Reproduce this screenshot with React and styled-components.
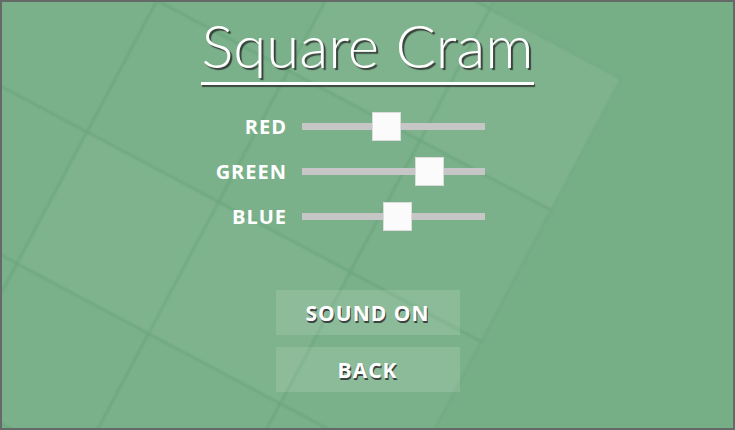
import { Fragment } from "react";
import styled, { createGlobalStyle } from "styled-components";

const GlobalStyle = createGlobalStyle`
  html, body {
    margin: 0;
    padding: 0;
    background: #76ae86;
  }
  * {
    box-sizing: border-box;
  }
`;

const TILE = 149;
const COLS = [-3, -2, -1, 0, 1, 2];
const ROWS = [-3, -2, -1, 0, 1, 2, 3];
const LIGHT = ["2,-2", "1,-2", "0,0", "1,0"];
const EMPTY = ["2,-3"];

const channels = [
  { name: "RED", value: 0.455 },
  { name: "GREEN", value: 0.735 },
  { name: "BLUE", value: 0.525 },
];

const Screen = styled.div`
  position: relative;
  width: 735px;
  height: 430px;
  overflow: hidden;
  background: #76ae86;
  border: 2px solid #646b67;
  font-family: "Open Sans", "Liberation Sans", sans-serif;
`;

const TileLayer = styled.div`
  position: absolute;
  left: 85px;
  top: 130px;
  transform: rotate(28deg);
  transform-origin: 0 0;
  filter: blur(0.8px);
`;

const TileGrid = styled.div`
  display: grid;
  grid-template-columns: repeat(${COLS.length}, ${TILE}px);
  grid-auto-rows: ${TILE}px;
  margin-left: ${-3 * TILE}px;
  margin-top: ${-3 * TILE}px;
`;

const Tile = styled.div`
  visibility: ${(p) => (p.$empty ? "hidden" : "visible")};
  background: ${(p) =>
    p.$light ? "rgba(255, 255, 255, 0.06)" : "rgba(255, 255, 255, 0.03)"};
  border: 1.5px solid rgba(40, 120, 70, 0.2);
`;

const Content = styled.div`
  position: relative;
  z-index: 1;
  display: flex;
  flex-direction: column;
  align-items: center;
  padding-top: 13px;
`;

const TitleBlock = styled.div`
  display: flex;
  flex-direction: column;
  align-items: stretch;
`;

const TitleText = styled.h1`
  margin: 0;
  font-family: Lato, "Open Sans", sans-serif;
  font-weight: 300;
  font-size: 60px;
  line-height: 1;
  color: #fff;
  white-space: nowrap;
  text-shadow: 2px 2px 1px rgba(45, 45, 45, 0.85);
`;

const Rule = styled.div`
  height: 3px;
  margin-top: 7px;
  background: #fff;
  box-shadow: 1px 2px 1px rgba(45, 45, 45, 0.8);
`;

const SliderGrid = styled.div`
  align-self: flex-start;
  margin-left: 181px;
  margin-top: 27px;
  display: grid;
  grid-template-columns: 104px 183px;
  grid-auto-rows: 29px;
  column-gap: 15px;
  row-gap: 16px;
  align-items: center;
`;

const Label = styled.span`
  justify-self: end;
  font-weight: 700;
  font-size: 20px;
  letter-spacing: 1px;
  color: #fff;
  line-height: 1;
`;

const Track = styled.div`
  position: relative;
  height: 7px;
  background: #c6c6c6;
`;

const Thumb = styled.div`
  position: absolute;
  top: 50%;
  width: 29px;
  height: 29px;
  margin-top: -14.5px;
  background: #fbfbfb;
  border: 1px solid #dcdcdc;
`;

const ButtonStack = styled.div`
  margin-top: 59px;
  display: flex;
  flex-direction: column;
  gap: 12px;
`;

const MenuButton = styled.button`
  width: 184px;
  height: 45px;
  border: none;
  padding: 0;
  background: rgba(255, 255, 255, 0.13);
  color: #fff;
  font-family: "Open Sans", "Liberation Sans", sans-serif;
  font-weight: 700;
  font-size: 21px;
  letter-spacing: 1px;
  text-shadow: 1px 2px 0 rgba(50, 50, 50, 0.9);
  cursor: pointer;
`;

const Slider = ({ value }) => (
  <Track>
    <Thumb style={{ left: `calc(${value} * (100% - 29px))` }} />
  </Track>
);

const App = () => {
  return (
    <>
      <GlobalStyle />
      <Screen>
        <TileLayer>
          <TileGrid>
            {ROWS.map((r) =>
              COLS.map((c) => {
                const id = `${c},${r}`;
                return (
                  <Tile
                    key={id}
                    $light={LIGHT.includes(id)}
                    $empty={EMPTY.includes(id)}
                  />
                );
              })
            )}
          </TileGrid>
        </TileLayer>
        <Content>
          <TitleBlock>
            <TitleText>Square Cram</TitleText>
            <Rule />
          </TitleBlock>
          <SliderGrid>
            {channels.map((ch) => (
              <Fragment key={ch.name}>
                <Label>{ch.name}</Label>
                <Slider value={ch.value} />
              </Fragment>
            ))}
          </SliderGrid>
          <ButtonStack>
            <MenuButton>SOUND ON</MenuButton>
            <MenuButton>BACK</MenuButton>
          </ButtonStack>
        </Content>
      </Screen>
    </>
  );
};

export default App;
